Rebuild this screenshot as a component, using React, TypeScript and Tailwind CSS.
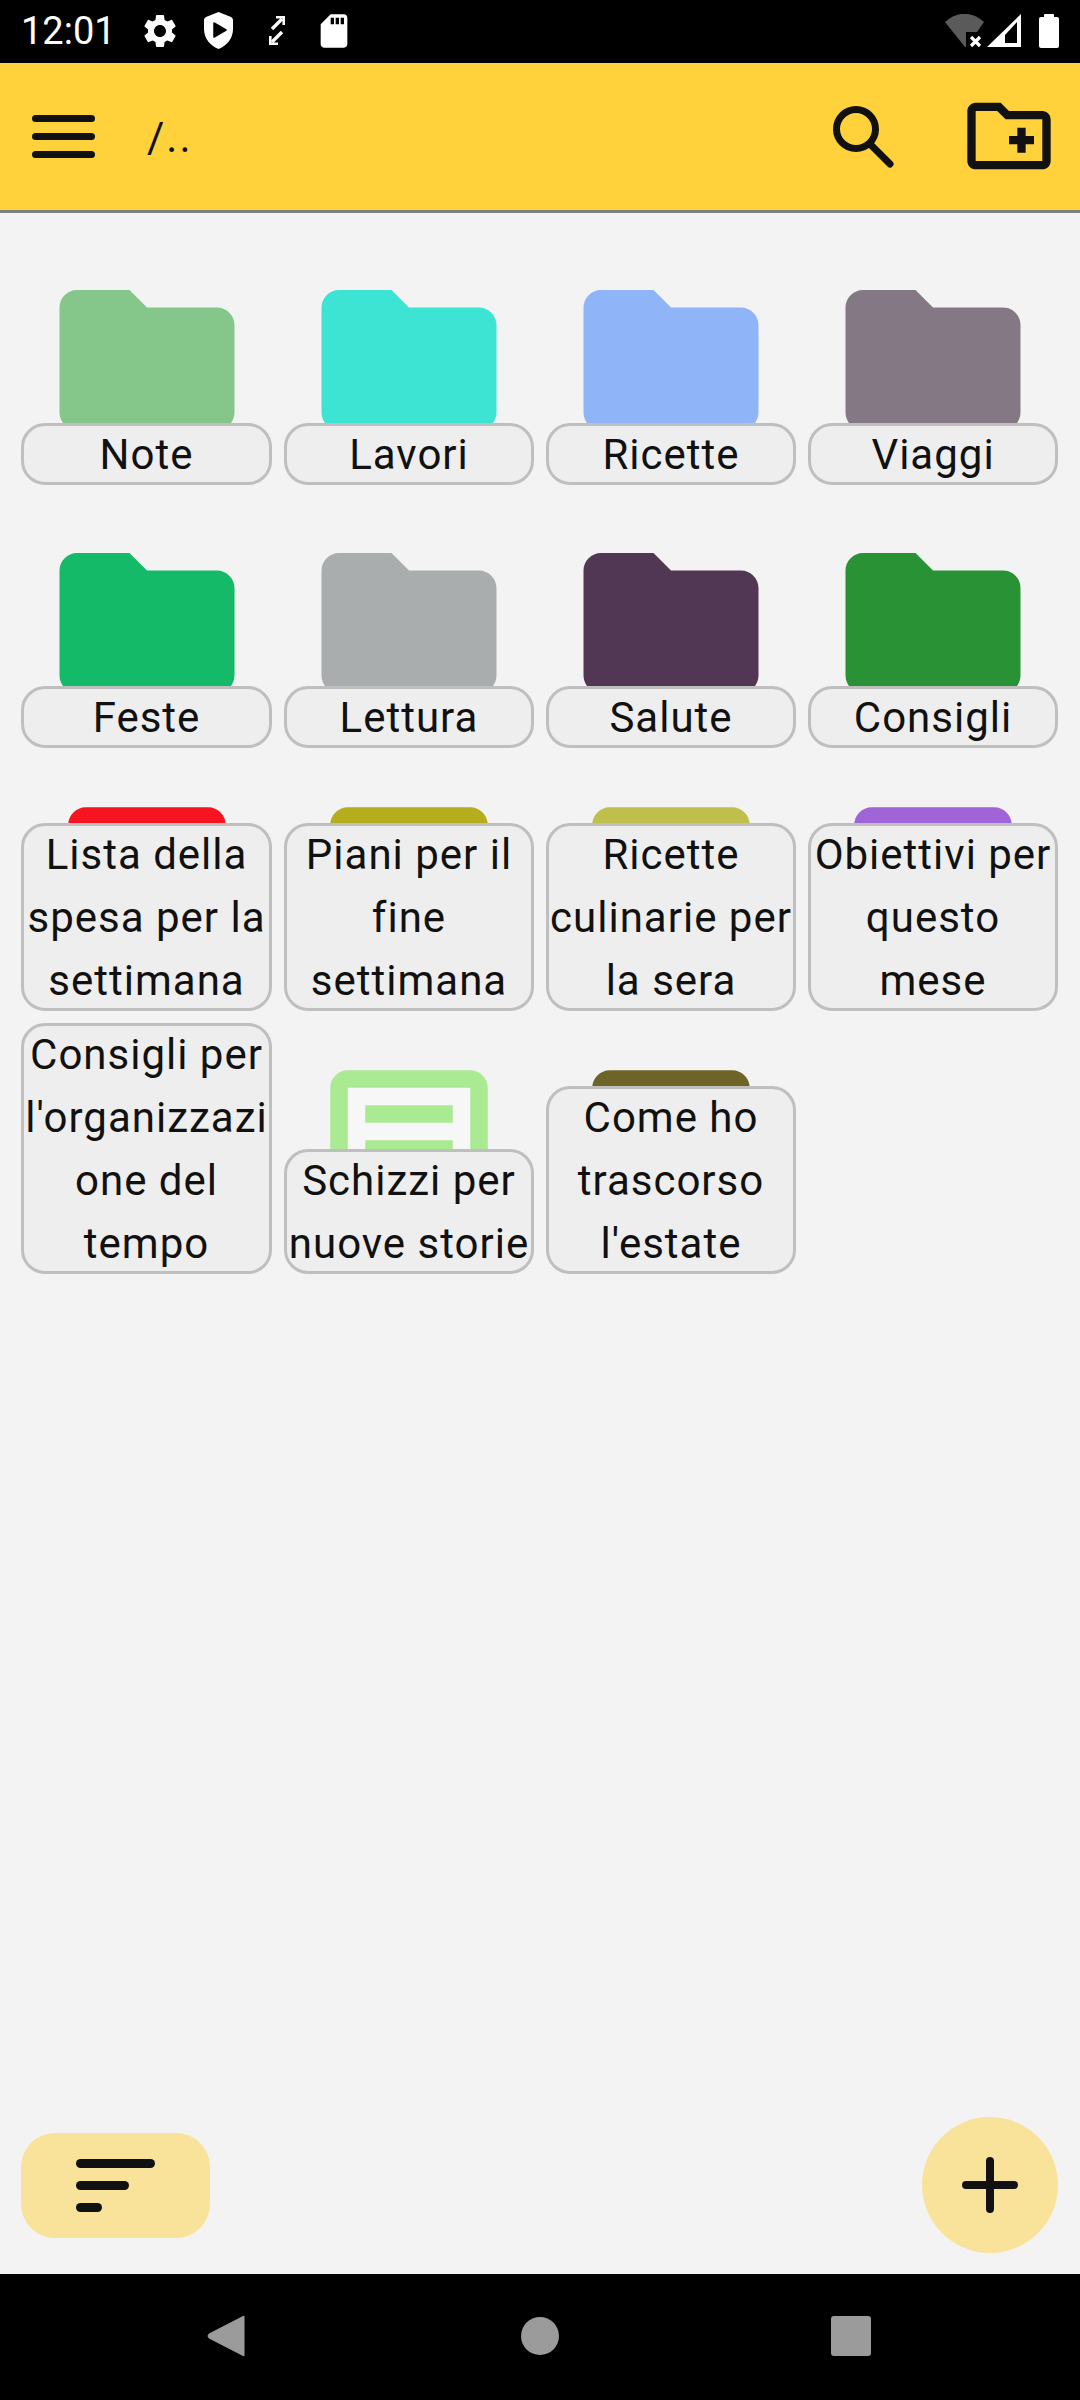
import { ReactNode } from "react";

type Item = { name: string; color: string; kind: "folder" | "note" };

const items: Item[] = [
  { name: "Note", color: "#85c68b", kind: "folder" },
  { name: "Lavori", color: "#3de3d3", kind: "folder" },
  { name: "Ricette", color: "#8fb5f8", kind: "folder" },
  { name: "Viaggi", color: "#857885", kind: "folder" },
  { name: "Feste", color: "#14ba68", kind: "folder" },
  { name: "Lettura", color: "#aaadae", kind: "folder" },
  { name: "Salute", color: "#523754", kind: "folder" },
  { name: "Consigli", color: "#289234", kind: "folder" },
  { name: "Lista della spesa per la settimana", color: "#f5141f", kind: "note" },
  { name: "Piani per il fine settimana", color: "#b5ad1b", kind: "note" },
  { name: "Ricette culinarie per la sera", color: "#bfc04b", kind: "note" },
  { name: "Obiettivi per questo mese", color: "#a163d8", kind: "note" },
  { name: "Consigli per l'organizzazione del tempo", color: "#3b82f6", kind: "note" },
  { name: "Schizzi per nuove storie", color: "#a9ea93", kind: "note" },
  { name: "Come ho trascorso l'estate", color: "#6f6428", kind: "note" },
];

function Icon({ size, children, color = "currentColor" }: { size: number; children: ReactNode; color?: string }) {
  return (
    <svg width={size} height={size} viewBox="0 0 24 24" fill={color} className="shrink-0">
      {children}
    </svg>
  );
}

function ItemIcon({ item }: { item: Item }) {
  if (item.kind === "folder") {
    return (
      <Icon size={210} color={item.color}>
        <path d="M10 4H4c-1.1 0-2 .9-2 2v12c0 1.1.9 2 2 2h16c1.1 0 2-.9 2-2V8c0-1.1-.9-2-2-2h-8l-2-2z" />
      </Icon>
    );
  }
  return (
    <Icon size={210} color={item.color}>
      <path d="M5 4h14v16H5z" fill="#f7f7f7" />
      <path d="M19 5v14H5V5h14m0-2H5c-1.1 0-2 .9-2 2v14c0 1.1.9 2 2 2h14c1.1 0 2-.9 2-2V5c0-1.1-.9-2-2-2z" />
      <path d="M14 17H7v-2h7v2zm3-4H7v-2h10v2zm0-4H7V7h10v2z" />
    </Icon>
  );
}

function Cell({ item }: { item: Item }) {
  return (
    <div className="relative h-[263px] flex justify-center pt-[33px]">
      <ItemIcon item={item} />
      <div className="absolute left-0 right-0 bottom-0 rounded-[24px] border-[3px] border-[#bfbfbf] bg-[#eeeeee] text-center text-[42px] leading-[63px] tracking-[1px] text-[#111111] break-words">
        <div className="-mt-[3px] -mb-[4px] -mx-[2px]">{item.name}</div>
      </div>
    </div>
  );
}

function StatusBar() {
  return (
    <div className="h-[63px] bg-black text-white flex items-center pl-[21px] pr-[21px] shrink-0">
      <span className="text-[38px] leading-none w-[119px] -mt-[1px]">12:01</span>
      <div className="flex items-center -mt-[2px]">
        <Icon size={40}>
          <path d="M19.14 12.94c.04-.3.06-.61.06-.94 0-.32-.02-.64-.07-.94l2.03-1.58c.18-.14.23-.41.12-.61l-1.92-3.32c-.12-.22-.37-.29-.59-.22l-2.39.96c-.5-.38-1.03-.7-1.62-.94l-.36-2.54c-.04-.24-.24-.41-.48-.41h-3.84c-.24 0-.43.17-.47.41l-.36 2.54c-.59.24-1.13.57-1.62.94l-2.39-.96c-.22-.08-.47 0-.59.22L2.74 8.87c-.12.21-.08.47.12.61l2.03 1.58c-.05.3-.07.62-.07.94s.02.64.07.94l-2.03 1.58c-.18.14-.23.41-.12.61l1.92 3.32c.12.22.37.29.59.22l2.39-.96c.5.38 1.03.7 1.62.94l.36 2.54c.05.24.24.41.48.41h3.84c.24 0 .44-.17.47-.41l.36-2.54c.59-.24 1.13-.56 1.62-.94l2.39.96c.22.08.47 0 .59-.22l1.92-3.32c.12-.22.07-.47-.12-.61l-2.01-1.58zM12 15.6c-1.98 0-3.6-1.62-3.6-3.6s1.62-3.6 3.6-3.6 3.6 1.62 3.6 3.6-1.62 3.6-3.6 3.6z" />
        </Icon>
        <svg width="29" height="37" viewBox="0 0 29 37" className="ml-[24px]">
          <path d="M14.5 0 L27 5 Q29 6 29 8 V17 C29 27 22 34 14.5 37 C7 34 0 27 0 17 V8 Q0 6 2 5 Z" fill="#fff" />
          <path d="M10 11 L22 18 L10 25 Z" fill="#000" stroke="#000" strokeWidth="1.5" strokeLinejoin="round" />
        </svg>
        <svg width="16" height="29" viewBox="0 0 16 29" fill="none" stroke="#fff" strokeWidth="3.4" className="ml-[36px]">
          <path d="M3 13 L13 3" />
          <path d="M7 1.3 H14.7 V9" strokeWidth="2.6" />
          <path d="M13 16 L3 26" />
          <path d="M1.3 20 V27.7 H9" strokeWidth="2.6" />
        </svg>
        <div className="ml-[29px]">
          <Icon size={40} color="#fff">
            <path d="M18 2h-8L4.02 8 4 20c0 1.1.9 2 2 2h12c1.1 0 2-.9 2-2V4c0-1.1-.9-2-2-2zm-6 6h-2V4h2v4zm3 0h-2V4h2v4zm3 0h-2V4h2v4z" />
          </Icon>
        </div>
      </div>
      <div className="ml-auto flex items-center -mt-[2px]">
        <svg width="40" height="34" viewBox="0 0 40 34" className="mr-[2px]">
          <path d="M0 8 C12 -3 27 -3 39 8 L32 18 H21 V33 H20 Z" fill="#5a5a5a" />
          <path d="M26 23 L35 32 M35 23 L26 32" stroke="#fff" strokeWidth="3.2" />
        </svg>
        <svg width="34" height="33" viewBox="0 0 34 33" className="mr-[18px]">
          <path fillRule="evenodd" d="M0 33 L34 0 V33 Z M18 29 H30 V8 L18 21 Z" fill="#fff" />
        </svg>
        <svg width="20" height="34" viewBox="0 0 20 34">
          <path d="M5 3 V1 Q5 0 6 0 H14 Q15 0 15 1 V3 H18 Q20 3 20 5 V32 Q20 34 18 34 H2 Q0 34 0 32 V5 Q0 3 2 3 Z" fill="#fff" />
        </svg>
      </div>
    </div>
  );
}

function AppBar() {
  return (
    <div className="h-[150px] bg-[#ffd23c] border-b-[3px] border-[#808080] flex items-center text-[#111111] shrink-0">
      <div className="ml-[32px] w-[63px] flex flex-col gap-[11px]">
        <div className="h-[7px] rounded-full bg-[#111111]" />
        <div className="h-[7px] rounded-full bg-[#111111]" />
        <div className="h-[7px] rounded-full bg-[#111111]" />
      </div>
      <span className="ml-[52px] text-[42px] leading-none tracking-[2px] mt-[3px]">/..</span>
      <div className="ml-auto flex items-center">
        <svg width="62" height="64" viewBox="0 0 62 64" fill="none" stroke="#111111" className="mr-[64px]">
          <circle cx="23" cy="24" r="19.5" strokeWidth="7" />
          <path d="M38 40 L57 59" strokeWidth="7" strokeLinecap="round" />
        </svg>
        <div className="mr-[21px] -mt-[2px]">
          <Icon size={100} color="#111111">
            <path d="M20 6h-8l-2-2H4c-1.11 0-1.99.89-1.99 2L2 18c0 1.11.89 2 2 2h16c1.11 0 2-.89 2-2V8c0-1.11-.89-2-2-2zm0 12H4V6h5.17l2 2H20v10z" />
            <path d="M14 16h2v-2h2v-2h-2v-2h-2v2h-2v2h2z" />
          </Icon>
        </div>
      </div>
    </div>
  );
}

function NavBar() {
  return (
    <div className="h-[126px] bg-black flex items-center shrink-0 pb-[2px]">
      <svg width="38" height="42" viewBox="0 0 38 42" className="ml-[207px]">
        <path d="M37 1 V41 L2 23 Q0 21 2 19 Z" fill="#9b9b9b" stroke="#9b9b9b" strokeLinejoin="round" />
      </svg>
      <div className="ml-[276px] w-[38px] h-[38px] rounded-full bg-[#9b9b9b]" />
      <div className="ml-[272px] w-[40px] h-[40px] rounded-[3px] bg-[#9b9b9b]" />
    </div>
  );
}

export default function App() {
  return (
    <div className="h-[2400px] w-[1080px] flex flex-col bg-[#f3f3f3] font-[Roboto,sans-serif] overflow-hidden">
      <StatusBar />
      <AppBar />
      <main className="flex-1 flex flex-col justify-between min-h-0">
        <div className="grid grid-cols-[251px_250px_250px_250px] gap-x-[12px] pl-[21px] pt-[9px]">
          {items.map((item) => (
            <Cell key={item.name} item={item} />
          ))}
        </div>
        <div className="flex items-center justify-between pl-[21px] pr-[22px] pb-[21px]">
          <div className="w-[189px] h-[105px] rounded-[34px] bg-[#f9e29a] flex flex-col gap-[13px] pl-[55px] justify-center">
            <div className="h-[9px] w-[79px] rounded-full bg-[#111111]" />
            <div className="h-[9px] w-[53px] rounded-full bg-[#111111]" />
            <div className="h-[9px] w-[26px] rounded-full bg-[#111111]" />
          </div>
          <div className="w-[136px] h-[136px] rounded-full bg-[#f9e29a] flex items-center justify-center">
            <svg width="56" height="56" viewBox="0 0 56 56" stroke="#111111" strokeWidth="8" strokeLinecap="round">
              <path d="M28 4 V52 M4 28 H52" />
            </svg>
          </div>
        </div>
      </main>
      <NavBar />
    </div>
  );
}
